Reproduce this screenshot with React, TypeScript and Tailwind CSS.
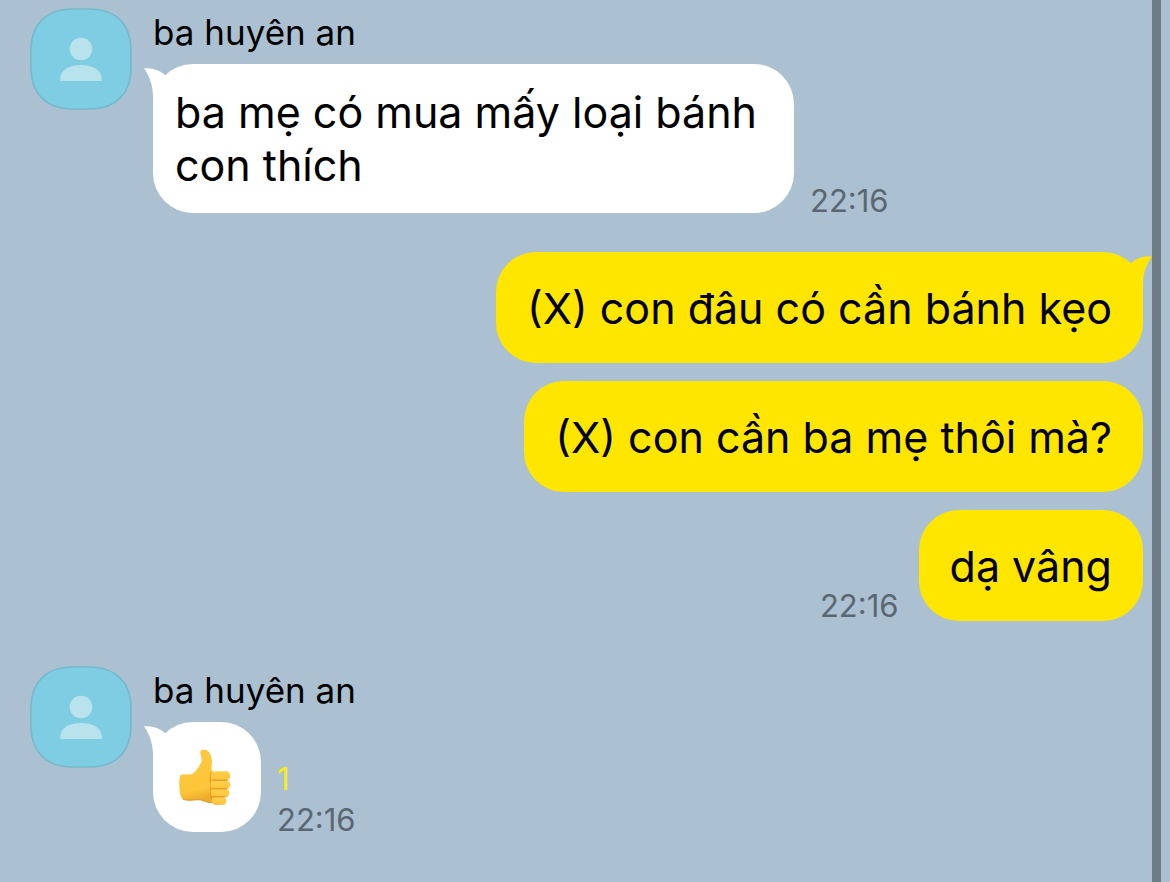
import type { ReactNode } from "react";
import clsx from "clsx";

type Message = {
  id: number;
  text: string;
};

const received: Message = { id: 1, text: "ba mẹ có mua mấy loại bánh con thích" };

const sent: Message[] = [
  { id: 2, text: "(X) con đâu có cần bánh kẹo" },
  { id: 3, text: "(X) con cần ba mẹ thôi mà?" },
  { id: 4, text: "dạ vâng" },
];

function Avatar() {
  return (
    <svg
      className="h-[102px] w-[102px] shrink-0"
      viewBox="0 0 102 102"
      role="img"
      aria-label="ba huyên an"
    >
      <path
        d="M40 1H62C86 2 100 16 101 40V62C100 86 86 100 62 101H40C16 100 2 86 1 62V40C2 16 16 2 40 1Z"
        fill="#7ecde2"
        stroke="#75b9cb"
        strokeWidth="1.6"
      />
      <circle cx="51" cy="41" r="11.3" fill="#b8e3ed" />
      <path d="M30 73C30 62 38 57 51 57C64 57 72 62 72 73Z" fill="#b8e3ed" />
    </svg>
  );
}

function Tail({ side }: { side: "left" | "right" }) {
  return (
    <svg
      className={clsx(
        "absolute top-1 h-10 w-[34px]",
        side === "left" ? "-left-[9px] text-white" : "-right-[9px] -scale-x-100 text-[#ffe600]"
      )}
      viewBox="0 0 34 40"
      aria-hidden="true"
    >
      <path
        d="M0 0.5C8 -0.5 15 2 21 7L34 20V40H9V28C9 17 5 7 0 0.5Z"
        fill="currentColor"
      />
    </svg>
  );
}

function ThumbsUp() {
  return (
    <svg className="h-14 w-14" viewBox="0 0 168 168" role="img" aria-label="👍">
      <defs>
        <linearGradient id="skin" x1="0" y1="0" x2="0.15" y2="1">
          <stop offset="0" stopColor="#fdc83c" />
          <stop offset="0.8" stopColor="#fdc63a" />
          <stop offset="1" stopColor="#eeaa2a" />
        </linearGradient>
        <linearGradient id="finger" x1="0" y1="0" x2="0" y2="1">
          <stop offset="0" stopColor="#ffd04a" />
          <stop offset="0.8" stopColor="#fdc73e" />
          <stop offset="1" stopColor="#efae2e" />
        </linearGradient>
      </defs>
      <path
        d="M5 77C19 75 30 79 40 74C54 64 65 48 68 35C70 23 61 16 65 6C69 -1 81 0 88 7C95 15 98 26 99 39C99 50 94 60 101 67C107 75 111 90 111 110L112 158C99 165 83 160 67 153C48 150 31 158 13 151C-2 145 -1 86 5 77Z"
        fill="url(#skin)"
      />
      <path
        d="M13 151C31 158 48 150 67 153C80 159 92 162 104 161"
        fill="none"
        stroke="#d99a2c"
        strokeWidth="3"
        strokeLinecap="round"
      />
      <path
        d="M97 70C91 88 95 104 96 118C94 134 96 150 104 161"
        fill="none"
        stroke="#dd9827"
        strokeWidth="4"
        strokeLinecap="round"
      />
      <rect x="95" y="67" width="59" height="27" rx="13" fill="url(#finger)" />
      <rect x="94" y="94" width="60" height="26" rx="13" fill="url(#finger)" />
      <rect x="95" y="119" width="56" height="25" rx="12" fill="url(#finger)" />
      <rect x="98" y="143" width="44" height="24" rx="12" fill="url(#finger)" />
      <path
        d="M101 94H145M101 119.500H143M103 143.500H137"
        stroke="#dc9422"
        strokeWidth="3"
        strokeLinecap="round"
      />
    </svg>
  );
}

function Time() {
  return <time className="block text-[31px] leading-6 text-[#5a6772]">22:16</time>;
}

function Incoming({ children, meta }: { children: ReactNode; meta: ReactNode }) {
  return (
    <article className="flex items-start gap-[21px]">
      <Avatar />
      <div className="min-w-0 flex-1 pt-1">
        <h2 className="mb-3 text-[35px] leading-10">ba huyên an</h2>
        <div className="flex items-end gap-4">
          {children}
          {meta}
        </div>
      </div>
    </article>
  );
}

export default function App() {
  return (
    <div className="flex min-h-screen bg-[#abc0d1] font-['Inter','Liberation_Sans',sans-serif] text-black">
      <main className="min-w-0 flex-1 pt-2 pr-[9px] pb-12 pl-[30px]">
        <Incoming meta={<Time />}>
          <div className="relative max-w-[641px] rounded-[40px] bg-white px-[22px] pt-[22px] pb-[21px]">
            <Tail side="left" />
            <p className="relative text-[43px] leading-[53px]">{received.text}</p>
          </div>
        </Incoming>

        <section className="mt-[39px] flex flex-col items-end gap-[18px]">
          {sent.map((message, i) => (
            <div key={message.id} className="flex items-end gap-5">
              {i === sent.length - 1 && (
                <div className="mb-[3px]">
                  <Time />
                </div>
              )}
              <div className="relative rounded-[40px] bg-[#ffe600] px-[31px] pt-[30px] pb-7">
                {i === 0 && <Tail side="right" />}
                <p className="relative text-[43px] leading-[53px]">{message.text}</p>
              </div>
            </div>
          ))}
        </section>

        <div className="mt-[45px]">
          <Incoming
            meta={
              <div>
                <span className="mb-[17px] block text-[31px] leading-6 text-[#f8ec1c]">1</span>
                <Time />
              </div>
            }
          >
            <div className="relative rounded-[40px] bg-white px-[26px] py-[27px]">
              <Tail side="left" />
              <div className="relative">
                <ThumbsUp />
              </div>
            </div>
          </Incoming>
        </div>
      </main>
      <div className="mr-[9px] w-[9px] shrink-0 bg-[#6e7c88]" />
    </div>
  );
}
